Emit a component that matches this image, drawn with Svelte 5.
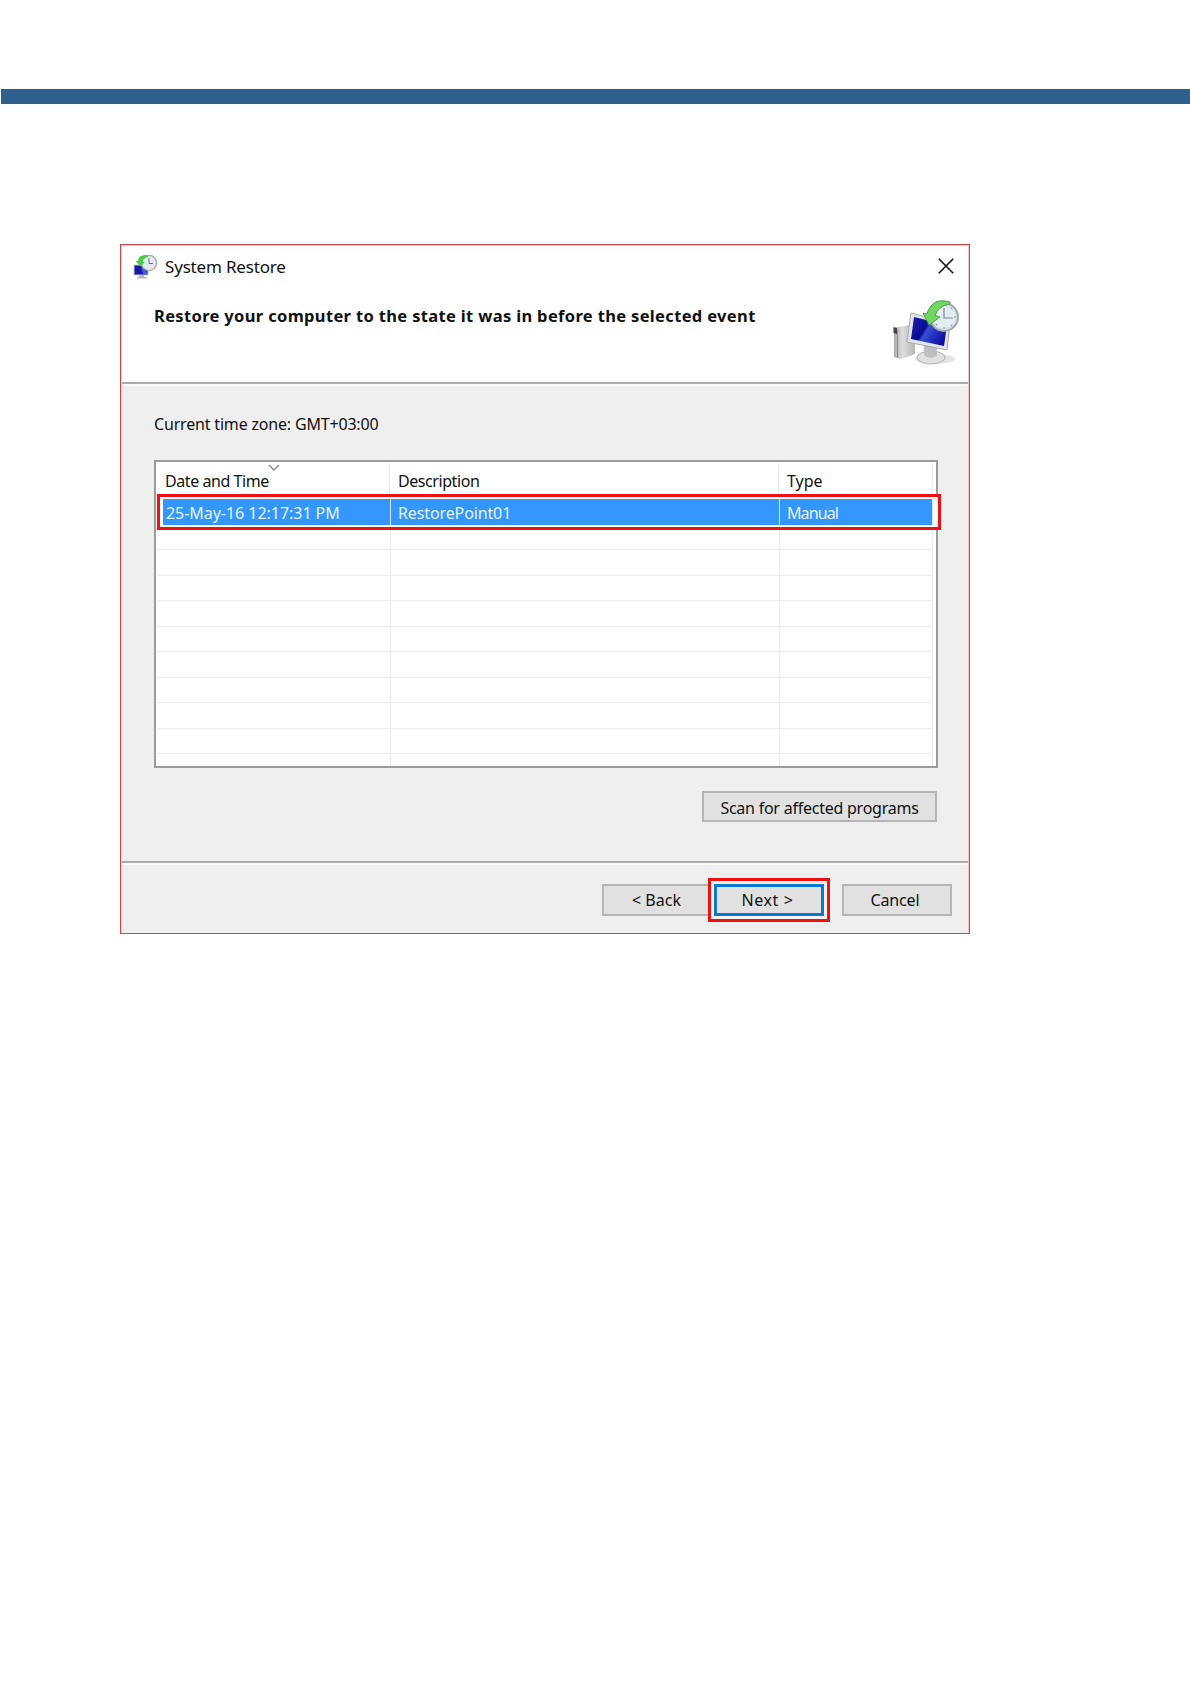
<script lang="ts">
  type RestorePoint = {
    date: string;
    description: string;
    type: string;
  };

  const points: RestorePoint[] = [
    { date: '25-May-16 12:17:31 PM', description: 'RestorePoint01', type: 'Manual' },
  ];

  const emptyRows = 9;

  let selected = $state(0);
</script>

{#snippet clock()}
  <circle cx="51" cy="17" r="14" fill="#d5e3ed" stroke="#a2a8ac" stroke-width="2" />
  <circle cx="51" cy="17" r="11" fill="#e2edf4" />
  <path d="M51 8 V18 H60" fill="none" stroke="#7c8892" stroke-width="1.2" />
  <path
    d="M51 27 V29 M39 17 H41 M61 17 H63 M43 25 L44 24 M58 25 L59 26 M58 9 L59 8"
    stroke="#8b959e"
    stroke-width="1.2"
  />
{/snippet}

{#snippet arrow()}
  <path
    d="M57 2 Q44 -2 38 6 Q35 9 34 14 L30 13 L36 25 L47 17 L42 15.5 Q45 6 57 4 Z"
    fill="#72d665"
    stroke="#4aa346"
  />
{/snippet}

<div class="page">
  <div class="rule"></div>

  <section class="dialog">
    <header class="titlebar">
      <svg class="small-icon" viewBox="0 0 25 25" aria-hidden="true">
        <path d="M1 11 L15 11 V21 H1 Z" fill="#1717a8" stroke="#c3cad6" />
        <path d="M8 12 L14 18 V20 H10 Z" fill="#3e5bd8" />
        <path d="M6 21 H11 V23 H14 V24.5 H4 V23 H6 Z" fill="#b5b8bb" />
        <circle cx="16" cy="9" r="7.6" fill="#e3ebef" stroke="#a5a9ac" stroke-width="1.4" />
        <path d="M16 4 V9.5 H20" fill="none" stroke="#66727c" />
        <path d="M15 1 Q5 0 5 7 H2.5 L7.5 12.5 L12 8 H9.5 Q10 4 15 3 Z" fill="#4ccb49" />
      </svg>
      <span class="title">System Restore</span>
      <button class="close" aria-label="Close">
        <svg viewBox="0 0 16 16"><path d="M0.8 0.8 L15.2 15.2 M15.2 0.8 L0.8 15.2" /></svg>
      </button>
    </header>

    <div class="heading">
      <h1>Restore your computer to the state it was in before the selected event</h1>
      <svg class="large-icon" viewBox="0 0 66 66" aria-hidden="true">
        <defs>
          <linearGradient id="screen" x1="0" y1="0.1" x2="1" y2="0.6">
            <stop offset="0" stop-color="#1b22ae" />
            <stop offset="0.42" stop-color="#0a0a94" />
            <stop offset="0.5" stop-color="#3450d4" />
            <stop offset="1" stop-color="#0d0da4" />
          </linearGradient>
          <linearGradient id="case" x1="0" y1="0" x2="1" y2="0">
            <stop offset="0" stop-color="#a9a9a9" />
            <stop offset="0.4" stop-color="#dedede" />
            <stop offset="1" stop-color="#b5b5b5" />
          </linearGradient>
        </defs>
        <ellipse cx="42" cy="59" rx="20" ry="5" fill="#e4e4e4" />
        <path d="M1 28 L16 25 L22 30 V54 L8 59 L1 57 Z" fill="url(#case)" />
        <path d="M0.5 27 L4 28 V34 L0.5 33 Z" fill="#444" />
        <path d="M4.5 30 V58" stroke="#8d8d8d" />
        <ellipse cx="38" cy="57.5" rx="14" ry="6.5" fill="#e0e0e0" stroke="#b0b0b0" />
        <path d="M31 45 L44 48 V56 Q37 60 31 55 Z" fill="#bfbfbf" />
        <path d="M18 13 L57 23 L54 50 L14 42 Z" fill="#e3e5e8" stroke="#a6a8aa" />
        <path d="M21 17 L54 25 L51 46 L18 39 Z" fill="url(#screen)" />
        {@render clock()}
        {@render arrow()}
      </svg>
    </div>

    <div class="content">
      <p class="timezone">Current time zone: GMT+03:00</p>

      <div class="list">
        <div class="row head">
          <span class="date">
            Date and Time
            <svg class="sort" viewBox="0 0 12 7"><path d="M1 1 L6 6 L11 1" /></svg>
          </span>
          <span class="description">Description</span>
          <span class="type">Type</span>
        </div>
        {#each points as point, i}
          <button class="row item" class:selected={selected === i} onclick={() => (selected = i)}>
            <span class="date">{point.date}</span>
            <span class="description">{point.description}</span>
            <span class="type">{point.type}</span>
          </button>
        {/each}
        {#each { length: emptyRows } as _}
          <div class="row empty"><span></span><span></span><span></span></div>
        {/each}
        <div class="row rest"><span></span><span></span><span></span></div>
      </div>

      <button class="btn scan">Scan for affected programs</button>
    </div>

    <footer>
      <button class="btn back">&lt; Back</button>
      <button class="btn next">Next &gt;</button>
      <button class="btn cancel">Cancel</button>
    </footer>
  </section>
</div>

<style>
  :global(body) {
    background: #fff;
  }

  .page {
    box-sizing: border-box;
    height: 1684px;
    padding-top: 89px;
    font-family: 'Noto Sans', 'Open Sans', sans-serif;
    font-size: 16px;
    color: #111;
  }

  button {
    padding: 0;
    border: 0;
    background: none;
    font: inherit;
    color: inherit;
  }

  svg {
    display: block;
  }

  .rule {
    height: 15px;
    margin-left: 1px;
    background: #2f608d;
  }

  .dialog {
    box-sizing: border-box;
    display: flex;
    flex-direction: column;
    width: 850px;
    height: 690px;
    margin: 140px 0 0 120px;
    border: 1px solid #c9474b;
    box-shadow: inset 0 0 0 1px #f6c5c5;
    background: #fff;
  }

  .titlebar {
    box-sizing: border-box;
    display: flex;
    align-items: center;
    height: 45px;
    padding: 0 15px 2px 12px;
  }

  .small-icon {
    width: 25px;
    height: 25px;
  }

  .title {
    margin-left: 7px;
    font-size: 17px;
    letter-spacing: -0.18px;
  }

  .close {
    width: 16px;
    height: 16px;
    margin: -1px 0 0 auto;
  }

  .close path {
    stroke: #111;
    stroke-width: 1.6;
  }

  .heading {
    box-sizing: border-box;
    display: flex;
    justify-content: space-between;
    height: 92px;
    padding: 10px 10px 0 33px;
  }

  h1 {
    margin: 4px 0 0;
    font-size: 16.5px;
    line-height: 24px;
    letter-spacing: 0.34px;
    white-space: nowrap;
  }

  .large-icon {
    width: 66px;
    height: 66px;
  }

  .content,
  footer {
    box-sizing: border-box;
    margin: 0 1px;
    border-top: 2px solid #ababab;
    box-shadow: inset 0 2px #fafafa;
    background: #efefef;
  }

  .content {
    display: flex;
    flex-direction: column;
    height: 479px;
    padding: 28px 30px 0 32px;
  }

  .timezone {
    margin: 0;
    line-height: 24px;
    letter-spacing: -0.18px;
  }

  .list {
    box-sizing: border-box;
    display: flex;
    flex-direction: column;
    height: 308px;
    margin-top: 24px;
    padding: 1px 3px 0 2px;
    border: 2px solid #9b9b9b;
    background: #fff;
  }

  .row {
    box-sizing: border-box;
    display: grid;
    flex: none;
    grid-template-columns: 233px 389px 1fr;
    height: 25.5px;
    text-align: left;
  }

  .row > span {
    border-right: 1px solid #ececec;
  }

  .head {
    grid-template-columns: 232px 389px 1fr;
    height: 36px;
    line-height: 37px;
    letter-spacing: -0.43px;
  }

  .head > span {
    padding-left: 8px;
  }

  .head .date {
    position: relative;
    padding-left: 7px;
  }

  .head .type {
    letter-spacing: 0;
  }

  .sort {
    position: absolute;
    top: 1px;
    left: 110px;
    width: 12px;
    height: 7px;
  }

  .sort path {
    fill: none;
    stroke: #8c8c8c;
    stroke-width: 1.4;
  }

  .item {
    position: relative;
    grid-template-rows: 25.5px;
    line-height: 28px;
    letter-spacing: -0.12px;
  }

  .item > span {
    padding-left: 7px;
  }

  .item .date {
    padding-left: 3px;
    letter-spacing: -0.04px;
  }

  .item .type {
    letter-spacing: -0.9px;
  }

  .selected {
    margin-left: 5px;
    grid-template-columns: 228px 389px 1fr;
    background: #3397fd;
    color: #e6f4ff;
  }

  .selected > span {
    border-color: #d5eaff;
  }

  /* highlight frame round the chosen restore point */
  .selected::after {
    content: '';
    position: absolute;
    inset: -5px -8px -5px -6px;
    border: 3px solid #ee1111;
    box-shadow: inset 0 0 0 2px #fff;
  }

  .empty {
    border-bottom: 1px solid #ececec;
  }

  .rest {
    flex: 1;
    height: auto;
  }

  .btn {
    box-sizing: border-box;
    height: 32px;
    border: 2px solid #b5b5b5;
    background: #e1e1e1;
    padding-top: 1px;
    line-height: 27px;
    text-align: center;
  }

  .scan {
    align-self: flex-end;
    width: 235px;
    height: 31px;
    margin: 23px 1px 0 0;
    padding-top: 2px;
    letter-spacing: -0.24px;
  }

  footer {
    display: flex;
    flex: 1;
    padding: 21px 16px 0 0;
    justify-content: flex-end;
  }

  .back {
    width: 112px;
    padding-right: 3px;
  }

  .next {
    width: 110px;
    padding-right: 3px;
    border: 3px solid #0b78d4;
    box-shadow:
      0 0 0 3px #f5f3f3,
      0 0 0 6px #f01010;
    line-height: 25px;
    letter-spacing: 0.6px;
  }

  .cancel {
    width: 110px;
    margin-left: 18px;
    padding-right: 4px;
    letter-spacing: -0.15px;
  }
</style>
